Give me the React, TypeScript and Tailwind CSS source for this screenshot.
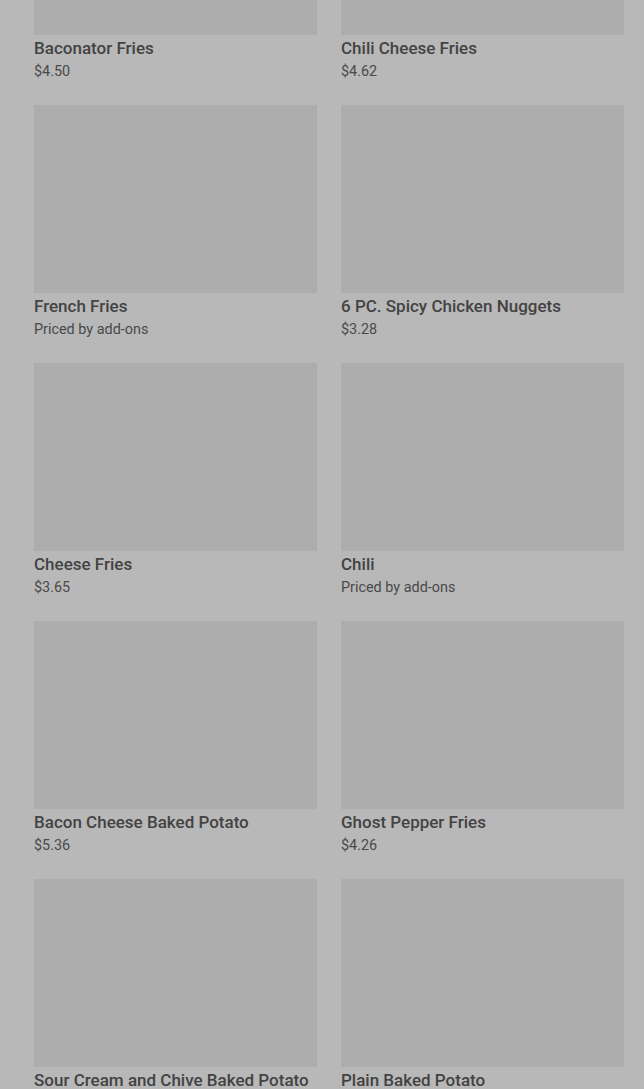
import React from "react";

const items: { name: string; price: string }[] = [
  { name: "Baconator Fries", price: "$4.50" },
  { name: "Chili Cheese Fries", price: "$4.62" },
  { name: "French Fries", price: "Priced by add-ons" },
  { name: "6 PC. Spicy Chicken Nuggets", price: "$3.28" },
  { name: "Cheese Fries", price: "$3.65" },
  { name: "Chili", price: "Priced by add-ons" },
  { name: "Bacon Cheese Baked Potato", price: "$5.36" },
  { name: "Ghost Pepper Fries", price: "$4.26" },
  { name: "Sour Cream and Chive Baked Potato", price: "$6.12" },
  { name: "Plain Baked Potato", price: "$3.42" },
];

export default function App() {
  return (
    <div
      className="h-[1089px] w-[644px] overflow-hidden bg-[#b8b8b8]"
      style={{ fontFamily: "Roboto, 'Noto Sans', sans-serif" }}
    >
      <div className="-mt-[153px] grid grid-cols-2 gap-x-[24px] gap-y-[24px] pl-[34px] pr-[20px]">
        {items.map((it) => (
          <div key={it.name} className="flex flex-col">
            <div className="h-[188px] w-full bg-[#adadad]" />
            <div className="mt-[1px] text-[17px] font-medium leading-[24px] text-[#434343]">
              {it.name}
            </div>
            <div className="mt-[2px] text-[14.4px] leading-[19px] text-[#4a4a4a]">
              {it.price}
            </div>
          </div>
        ))}
      </div>
    </div>
  );
}
